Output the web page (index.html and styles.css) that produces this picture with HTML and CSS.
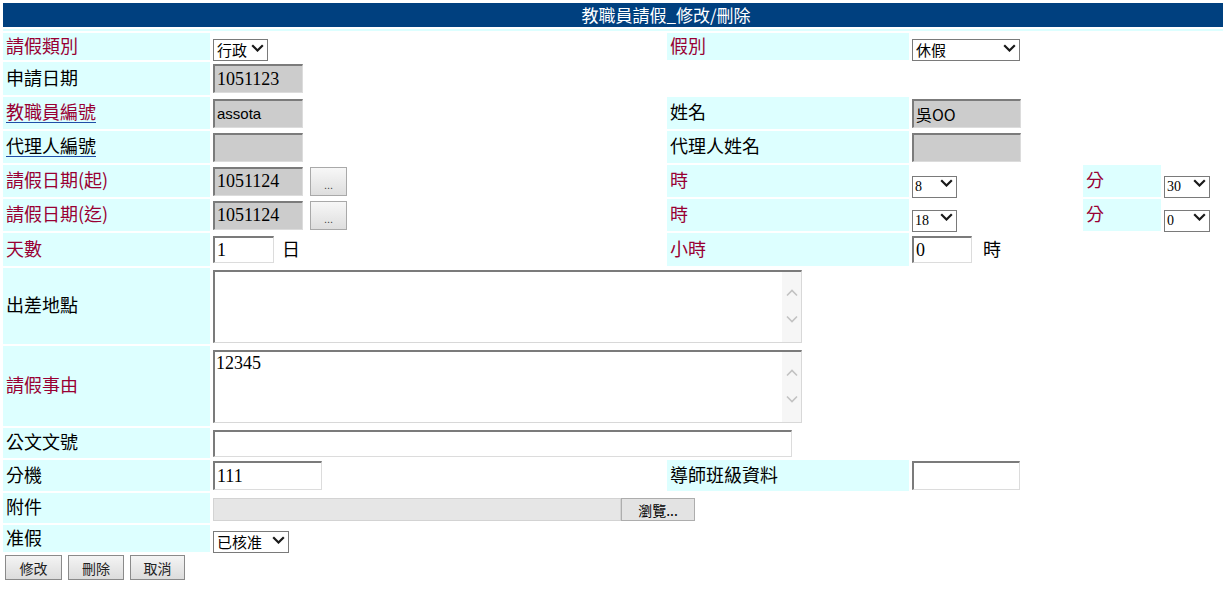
FILE: index.html
```html
<!DOCTYPE html>
<html lang="zh-Hant">
<head>
<meta charset="utf-8">
<title>教職員請假_修改/刪除</title>
<link rel="stylesheet" href="styles.css">
</head>
<body>
<form class="page">
<table class="grid">
<colgroup>
<col class="c1"><col class="c2"><col class="c3"><col class="c4"><col class="c5"><col class="c6">
</colgroup>
<tr class="h-title"><td colspan="6" class="title">教職員請假_修改/刪除</td></tr>
<tr class="h-strip"><td colspan="6" class="strip"></td></tr>

<tr class="h27">
  <td class="lbl red">請假類別</td>
  <td class="fld"><span class="sel w55"><select><option>行政</option></select><svg class="chev" viewBox="0 0 13 8"><path d="M1.2 1.2l5.3 5.3 5.3-5.3"/></svg></span></td>
  <td class="lbl red">假別</td>
  <td class="fld"><span class="sel w108"><select><option>休假</option></select><svg class="chev" viewBox="0 0 13 8"><path d="M1.2 1.2l5.3 5.3 5.3-5.3"/></svg></span></td>
  <td></td><td></td>
</tr>

<tr class="h33">
  <td class="lbl">申請日期</td>
  <td class="fld"><input class="ro w90" value="1051123" readonly></td>
  <td></td><td></td><td></td><td></td>
</tr>

<tr class="h32">
  <td class="lbl"><a class="lnk" href="#"><span class="red">教職員編號</span></a></td>
  <td class="fld"><input class="ro w90 sans" value="assota" readonly></td>
  <td class="lbl">姓名</td>
  <td class="fld"><input class="ro w109 cjk" value="吳OO" readonly></td>
  <td></td><td></td>
</tr>

<tr class="h32">
  <td class="lbl"><a class="lnk" href="#"><span class="blk">代理人編號</span></a></td>
  <td class="fld"><input class="ro w90" value="" readonly></td>
  <td class="lbl">代理人姓名</td>
  <td class="fld"><input class="ro w109" value="" readonly></td>
  <td></td><td></td>
</tr>

<tr class="h32">
  <td class="lbl red">請假日期(起)</td>
  <td class="fld"><div class="inl"><input class="ro w90" value="1051124" readonly><button type="button" class="dots">...</button></div></td>
  <td class="lbl red">時</td>
  <td class="fld"><span class="sel w45"><select class="num"><option>8</option></select><svg class="chev" viewBox="0 0 13 8"><path d="M1.2 1.2l5.3 5.3 5.3-5.3"/></svg></span></td>
  <td class="lbl red">分</td>
  <td class="fld"><span class="sel w46"><select class="num"><option>30</option></select><svg class="chev" viewBox="0 0 13 8"><path d="M1.2 1.2l5.3 5.3 5.3-5.3"/></svg></span></td>
</tr>

<tr class="h32">
  <td class="lbl red">請假日期(迄)</td>
  <td class="fld"><div class="inl"><input class="ro w90" value="1051124" readonly><button type="button" class="dots">...</button></div></td>
  <td class="lbl red">時</td>
  <td class="fld"><span class="sel w45"><select class="num"><option>18</option></select><svg class="chev" viewBox="0 0 13 8"><path d="M1.2 1.2l5.3 5.3 5.3-5.3"/></svg></span></td>
  <td class="lbl red">分</td>
  <td class="fld"><span class="sel w46"><select class="num"><option>0</option></select><svg class="chev" viewBox="0 0 13 8"><path d="M1.2 1.2l5.3 5.3 5.3-5.3"/></svg></span></td>
</tr>

<tr class="h33">
  <td class="lbl red">天數</td>
  <td class="fld"><div class="inl"><input class="ed w61" value="1"><span class="unit">日</span></div></td>
  <td class="lbl red">小時</td>
  <td class="fld"><div class="inl"><input class="ed w60" value="0"><span class="unit u2">時</span></div></td>
  <td></td><td></td>
</tr>

<tr class="h76">
  <td class="lbl">出差地點</td>
  <td class="fld" colspan="5">
    <div class="ta"><textarea></textarea><div class="sb"><svg class="arr" viewBox="0 0 12 8"><path d="M1 6.5l5-5 5 5"/></svg><svg class="arr dn" viewBox="0 0 12 8"><path d="M1 1.5l5 5 5-5"/></svg></div></div>
  </td>
</tr>

<tr class="h80">
  <td class="lbl red">請假事由</td>
  <td class="fld" colspan="5">
    <div class="ta"><textarea>12345</textarea><div class="sb"><svg class="arr" viewBox="0 0 12 8"><path d="M1 6.5l5-5 5 5"/></svg><svg class="arr dn" viewBox="0 0 12 8"><path d="M1 1.5l5 5 5-5"/></svg></div></div>
  </td>
</tr>

<tr class="h30">
  <td class="lbl">公文文號</td>
  <td class="fld" colspan="5"><input class="ed w579" value=""></td>
</tr>

<tr class="h31">
  <td class="lbl">分機</td>
  <td class="fld"><input class="ed w109 h29" value="111"></td>
  <td class="lbl">導師班級資料</td>
  <td class="fld"><input class="ed w108 h29" value=""></td>
  <td></td><td></td>
</tr>

<tr class="h30">
  <td class="lbl">附件</td>
  <td class="fld" colspan="5"><div class="file"><span class="file-bar"></span><button type="button" class="file-btn">瀏覽...</button></div></td>
</tr>

<tr class="h27">
  <td class="lbl">准假</td>
  <td class="fld"><span class="sel w76"><select><option>已核准</option></select><svg class="chev" viewBox="0 0 13 8"><path d="M1.2 1.2l5.3 5.3 5.3-5.3"/></svg></span></td>
  <td></td><td></td><td></td><td></td>
</tr>
</table>

<div class="actions">
  <button type="button" class="btn b57">修改</button>
  <button type="button" class="btn b56">刪除</button>
  <button type="button" class="btn b55">取消</button>
</div>
</form>
</body>
</html>
```

FILE: styles.css
```css
html, body {
  margin: 0;
  padding: 0;
  background: #ffffff;
}

body {
  padding: 1px 0 0 1px;
  font-family: "Noto Sans CJK TC", "Noto Sans", sans-serif;
  color: #000;
}

.page {
  margin: 0;
}

.grid {
  width: 1224px;
  table-layout: fixed;
  border-collapse: separate;
  border-spacing: 2px;
}

.c1 { width: 207px; }
.c2 { width: 453px; }
.c3 { width: 242px; }
.c4 { width: 170px; }
.c5 { width: 78px; }
.c6 { width: 60px; }

.grid td {
  padding: 0;
  box-sizing: border-box;
  vertical-align: middle;
}

.h-title { height: 24px; }
.h-strip { height: 2px; }
.h27 { height: 27px; }
.h30 { height: 30px; }
.h31 { height: 31px; }
.h32 { height: 32px; }
.h33 { height: 33px; }
.h76 { height: 76px; }
.h80 { height: 80px; }

.title {
  background: #00407f;
  color: #ffffff;
  font-size: 17px;
  line-height: 24px;
  text-align: center;
  padding-left: 106px !important;
}

.strip {
  background: #ddffff;
  line-height: 0;
  font-size: 0;
}

.lbl {
  background: #ddffff;
  font-size: 18px;
  line-height: 22px;
  padding: 0 0 4px 3px !important;
  white-space: nowrap;
}

.red { color: #990033; }
.blk { color: #000000; }

.lnk {
  color: #1f4fa8;
  text-decoration: underline;
  text-underline-offset: 3px;
}

.fld {
  padding-left: 1px !important;
}

.inl {
  display: flex;
  align-items: center;
}

/* text inputs */
input {
  box-sizing: border-box;
  margin: 0;
  padding: 0 2px;
  outline: none;
  font-family: "Liberation Serif", serif;
  font-size: 18px;
  color: #000;
  border-top: 2px solid #7b7b7b;
  border-left: 2px solid #7b7b7b;
  border-right: 1px solid #dcdcdc;
  border-bottom: 1px solid #dcdcdc;
  border-radius: 0;
  vertical-align: middle;
}

.ro {
  background: #cccccc;
  height: 29px;
}

.ed {
  background: #ffffff;
  height: 27px;
}

.h29 { height: 29px; }

.sans {
  font-family: "Liberation Sans", sans-serif;
  font-size: 15px;
}

.cjk {
  font-family: "Noto Sans CJK TC", sans-serif;
  font-size: 16px;
}

.w55 { width: 55px; }
.w45 { width: 45px; }
.w46 { width: 46px; }
.w60 { width: 60px; }
.w61 { width: 61px; }
.w76 { width: 76px; }
.w90 { width: 90px; }
.w108 { width: 108px; }
.w109 { width: 109px; }
.w579 { width: 579px; }

.unit {
  font-size: 18px;
  margin-left: 8px;
  padding-bottom: 3px;
}

.u2 { margin-left: 11px; }

/* "..." date picker button */
.dots {
  margin: 0 0 0 7px;
  padding: 0 0 4px 0;
  width: 37px;
  height: 29px;
  box-sizing: border-box;
  border: 1px solid #a9a9a9;
  border-radius: 0;
  background: linear-gradient(#f7f7f7, #dedede);
  color: #444;
  font-family: "Liberation Sans", sans-serif;
  font-size: 11px;
  line-height: 1;
  display: flex;
  align-items: flex-end;
  justify-content: center;
}

/* selects */
.sel {
  position: relative;
  display: inline-block;
  height: 22px;
  vertical-align: middle;
}

.sel select {
  appearance: none;
  -webkit-appearance: none;
  box-sizing: border-box;
  width: 100%;
  height: 22px;
  margin: 0;
  padding: 0 0 0 3px;
  border: 1px solid #7a7a7a;
  border-radius: 0;
  background: #ffffff;
  font-family: "Noto Sans CJK TC", sans-serif;
  font-size: 15px;
  line-height: 20px;
  color: #000;
  outline: none;
}

.sel select.num {
  font-family: "Liberation Serif", serif;
  font-size: 14px;
  padding-left: 2px;
}

.chev {
  position: absolute;
  right: 4px;
  top: 7px;
  width: 13px;
  height: 8px;
  pointer-events: none;
}

.chev path {
  fill: none;
  stroke: #1a1a1a;
  stroke-width: 2.2;
}

/* textareas with a drawn scrollbar */
.ta {
  display: flex;
  box-sizing: border-box;
  width: 589px;
  height: 73px;
  border-top: 2px solid #7b7b7b;
  border-left: 2px solid #7b7b7b;
  border-right: 1px solid #d8d8d8;
  border-bottom: 1px solid #d8d8d8;
  background: #ffffff;
}

.ta textarea {
  flex: 1;
  border: 0;
  margin: 0;
  padding: 1px 1px;
  resize: none;
  outline: none;
  overflow: hidden;
  font-family: "Liberation Serif", serif;
  font-size: 18px;
  line-height: 20px;
  color: #000;
  background: #ffffff;
}

.sb {
  width: 19px;
  background: #f6f6f6;
  display: flex;
  flex-direction: column;
  align-items: center;
  padding-top: 17px;
  box-sizing: border-box;
}

.arr {
  width: 12px;
  height: 8px;
}

.arr.dn { margin-top: 18px; }

.arr path {
  fill: none;
  stroke: #c2c2c2;
  stroke-width: 1.6;
}

/* file input look-alike */
.file {
  display: flex;
  align-items: center;
  padding-top: 3px;
}

.file-bar {
  display: block;
  box-sizing: border-box;
  width: 408px;
  height: 23px;
  background: #e6e6e6;
  border: 1px solid #d3d3d3;
}

.file-btn {
  box-sizing: border-box;
  width: 74px;
  height: 23px;
  margin: 0;
  padding: 0;
  border: 1px solid #adadad;
  border-radius: 0;
  background: #e3e3e3;
  font-family: "Noto Sans CJK TC", sans-serif;
  font-size: 14px;
  line-height: 20px;
  color: #000;
}

/* bottom action buttons */
.actions {
  display: flex;
  gap: 6px;
  padding: 1px 0 0 4px;
}

.btn {
  box-sizing: border-box;
  height: 25px;
  margin: 0;
  padding: 0;
  border: 1px solid #8a8a8a;
  border-radius: 0;
  background: linear-gradient(#f4f4f4, #dcdcdc);
  font-family: "Noto Sans CJK TC", sans-serif;
  font-size: 14px;
  line-height: 22px;
  color: #222;
}

.b57 { width: 57px; }
.b56 { width: 56px; }
.b55 { width: 55px; }
```
